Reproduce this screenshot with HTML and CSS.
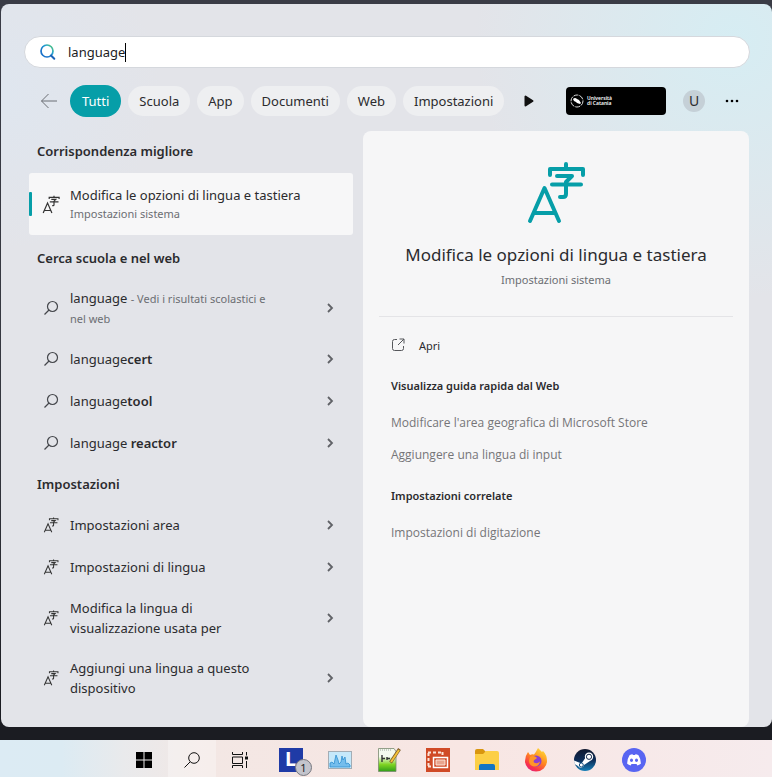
FILE: index.html
```html
<!DOCTYPE html>
<html lang="it">
<head>
    <meta charset="UTF-8">
    <meta name="viewport" content="width=device-width, initial-scale=1.0">
    <title>Cerca</title>
    <link rel="stylesheet" href="styles.css">
</head>
<body>

<!-- Icone condivise -->
<svg class="sprite" aria-hidden="true">
    <symbol id="icon-lang" viewBox="0 0 60 62">
        <path d="M4 59 18.500 26 33 59M9 51h19M40 2v5M24 13V7h33v6M31 14h15l-6 6v12q0 3-3 3h-3M26 22.500h29"/>
    </symbol>
    <symbol id="icon-search" viewBox="0 0 16 16">
        <circle cx="9.500" cy="6.500" r="5"/>
        <path d="M6 10 1.500 14.500"/>
    </symbol>
    <symbol id="icon-chevron" viewBox="0 0 10 12">
        <path d="M3 2 7 6 3 10"/>
    </symbol>
</svg>

<!-- Pannello di ricerca -->
<main class="panel">
    <form class="search-box" onsubmit="return false">
        <svg class="search-logo" viewBox="0 0 18 18" aria-hidden="true">
            <defs>
                <linearGradient id="searchGrad" x1="0" y1="1" x2="1" y2="0">
                    <stop offset="0.3" stop-color="#1a72c9"/>
                    <stop offset="0.65" stop-color="#22a0d0"/>
                    <stop offset="1" stop-color="#5fd068"/>
                </linearGradient>
            </defs>
            <circle cx="8" cy="8" r="6" fill="none" stroke="url(#searchGrad)" stroke-width="1.700"/>
            <path d="M12 12.500 15.300 15.800" stroke="#1a62b8" stroke-width="2" stroke-linecap="round"/>
        </svg>
        <input class="search-input" type="text" value="language" aria-label="Cerca">
        <span class="caret"></span>
    </form>

    <div class="toolbar">
        <button class="back-btn" aria-label="Indietro">
            <svg viewBox="0 0 18 16"><path d="M17 8H1.500M8.500 1 1.500 8l7 7"/></svg>
        </button>
        <nav class="tabs">
            <button class="tab active">Tutti</button>
            <button class="tab">Scuola</button>
            <button class="tab">App</button>
            <button class="tab">Documenti</button>
            <button class="tab">Web</button>
            <button class="tab">Impostazioni</button>
        </nav>
        <button class="next-btn" aria-label="Altre categorie">
            <svg viewBox="0 0 10 12"><path d="M1.500 1.500v9L8.500 6z"/></svg>
        </button>
        <div class="org">
            <svg viewBox="0 0 14 14" aria-hidden="true">
                <circle cx="7" cy="7" r="6" fill="none" stroke="#ddd" stroke-dasharray="5 1"/>
                <path d="M3 5q2-2 4 0l2 1 2 3-1 1-3-1-1-1-2-1z" fill="#fff"/>
            </svg>
            <span>Università<br>di Catania</span>
        </div>
        <button class="avatar">U</button>
        <button class="more-btn" aria-label="Altre opzioni">
            <svg viewBox="0 0 14 4"><circle cx="2" cy="2" r="1.300"/><circle cx="7" cy="2" r="1.300"/><circle cx="12" cy="2" r="1.300"/></svg>
        </button>
    </div>

    <div class="content">
        <section class="results">
            <h2 class="group-title">Corrispondenza migliore</h2>
            <button class="best-match">
                <svg class="icon icon-lang"><use href="#icon-lang"/></svg>
                <span class="row-text">Modifica le opzioni di lingua e tastiera<small>Impostazioni sistema</small></span>
            </button>

            <h2 class="group-title">Cerca scuola e nel web</h2>
            <button class="row tall">
                <svg class="icon"><use href="#icon-search"/></svg>
                <span class="row-text">language <small>- Vedi i risultati scolastici e nel web</small></span>
                <svg class="chevron"><use href="#icon-chevron"/></svg>
            </button>
            <button class="row">
                <svg class="icon"><use href="#icon-search"/></svg>
                <span class="row-text">language<b>cert</b></span>
                <svg class="chevron"><use href="#icon-chevron"/></svg>
            </button>
            <button class="row">
                <svg class="icon"><use href="#icon-search"/></svg>
                <span class="row-text">language<b>tool</b></span>
                <svg class="chevron"><use href="#icon-chevron"/></svg>
            </button>
            <button class="row">
                <svg class="icon"><use href="#icon-search"/></svg>
                <span class="row-text">language <b>reactor</b></span>
                <svg class="chevron"><use href="#icon-chevron"/></svg>
            </button>

            <h2 class="group-title">Impostazioni</h2>
            <button class="row">
                <svg class="icon icon-lang"><use href="#icon-lang"/></svg>
                <span class="row-text">Impostazioni area</span>
                <svg class="chevron"><use href="#icon-chevron"/></svg>
            </button>
            <button class="row">
                <svg class="icon icon-lang"><use href="#icon-lang"/></svg>
                <span class="row-text">Impostazioni di lingua</span>
                <svg class="chevron"><use href="#icon-chevron"/></svg>
            </button>
            <button class="row tall">
                <svg class="icon icon-lang"><use href="#icon-lang"/></svg>
                <span class="row-text">Modifica la lingua di visualizzazione usata per</span>
                <svg class="chevron"><use href="#icon-chevron"/></svg>
            </button>
            <button class="row tall">
                <svg class="icon icon-lang"><use href="#icon-lang"/></svg>
                <span class="row-text">Aggiungi una lingua a questo dispositivo</span>
                <svg class="chevron"><use href="#icon-chevron"/></svg>
            </button>
        </section>

        <!-- Dettaglio del risultato -->
        <section class="preview">
            <svg class="preview-icon"><use href="#icon-lang"/></svg>
            <h1 class="preview-title">Modifica le opzioni di lingua e tastiera</h1>
            <p class="preview-sub">Impostazioni sistema</p>
            <hr>
            <button class="open-btn">
                <svg viewBox="0 0 14 14"><path d="M6 1.500H3.500a2 2 0 0 0-2 2v7a2 2 0 0 0 2 2h7a2 2 0 0 0 2-2V8M8.500 1h4.500v4.500M13 1 7 7"/></svg>
                Apri
            </button>
            <h3>Visualizza guida rapida dal Web</h3>
            <a href="#">Modificare l'area geografica di Microsoft Store</a>
            <a href="#">Aggiungere una lingua di input</a>
            <h3>Impostazioni correlate</h3>
            <a href="#">Impostazioni di digitazione</a>
        </section>
    </div>
</main>

<!-- Barra delle applicazioni -->
<footer class="taskbar">
    <div class="system">
        <button class="task" aria-label="Start">
            <svg class="small" viewBox="0 0 16 16"><path d="M0 0h7.500v7.500H0zM8.500 0H16v7.500H8.500zM0 8.500h7.500V16H0zM8.500 8.500H16V16H8.500z"/></svg>
        </button>
        <button class="task selected" aria-label="Cerca">
            <svg class="small line" viewBox="0 0 16 16"><circle cx="10" cy="6" r="5.300"/><path d="M6.200 9.800.5 15.500"/></svg>
        </button>
        <button class="task" aria-label="Visualizzazione attività">
            <svg class="small line" viewBox="0 0 16 16"><path d="M.5 0v2.500h10V0M.5 5h10v6.500H.5zM.5 16v-2.500h10V16M14.500 0v3.500M14.500 9v7"/><path d="M13 4.500h3v3h-3z" fill="#111" stroke="none"/></svg>
        </button>
    </div>
    <div class="apps">
        <button class="task" aria-label="L, 1 notifica">
            <span class="app-l">L</span>
            <span class="badge">1</span>
        </button>
        <button class="task" aria-label="Monitor">
            <svg viewBox="0 0 24 24">
                <rect x=".5" y="3.500" width="23" height="17" fill="#c5e8fa" stroke="#a3adb5"/>
                <path d="M2 19v-4l2-1 2 2 2-9 2 5 1 4 2-2 1-6 1 4 2-3 1 7 2-1 2 2v2z" fill="#74bdec" stroke="#2f8fd0" stroke-width=".8"/>
            </svg>
        </button>
        <button class="task" aria-label="Editor">
            <svg viewBox="0 0 24 24">
                <defs>
                    <linearGradient id="greenGrad" x1="0" y1="0" x2="0" y2="1">
                        <stop offset="0.35" stop-color="#f4faee"/>
                        <stop offset="0.7" stop-color="#7ed321"/>
                        <stop offset="1" stop-color="#2f9e1a"/>
                    </linearGradient>
                </defs>
                <path d="M1.500.500H17l2 3v20H1.500z" fill="url(#greenGrad)" stroke="#7a8a70" stroke-width=".8"/>
                <path d="M3 2h12" stroke="#9aa59a" stroke-dasharray="1 1"/>
                <path d="M5 7v7M5 10.500h3M10 9v3M13 10.500h-3" stroke="#333" stroke-width="1.400"/>
                <path d="M22.500 1 13.500 14.500" stroke="#7a5a28" stroke-width="3.200"/>
                <path d="M22 2 14 14" stroke="#f3c238" stroke-width="2"/>
            </svg>
        </button>
        <button class="task" aria-label="Cattura">
            <svg viewBox="0 0 24 24">
                <path d="M0 0h24v24H0z" fill="#d04a26"/>
                <path d="M2 4.500h15M2.500 5v13M2 18.500h5M16.500 4v4" stroke="#fbe3d8" stroke-width="2" stroke-dasharray="3 2" fill="none"/>
                <path d="M7.500 9.500h14v10h-14z" fill="#d04a26" stroke="#fff" stroke-width="1.500"/>
                <path d="M10 12h9v5h-9z" fill="#e8a58f" stroke="#fbe3d8"/>
            </svg>
        </button>
        <button class="task" aria-label="Esplora file">
            <svg viewBox="0 0 24 24">
                <path d="M0 3a2 2 0 0 1 2-2h6l3 3v4H0z" fill="#d9960f"/>
                <path d="M0 6h8l3-3h11a2 2 0 0 1 2 2v17H0z" fill="#fccf45"/>
                <path d="M4 22v-4a2 2 0 0 1 2-2h12a2 2 0 0 1 2 2v4z" fill="#1475c4"/>
            </svg>
        </button>
        <button class="task" aria-label="Firefox">
            <svg viewBox="0 0 24 24">
                <defs>
                    <linearGradient id="foxGrad" x1="0.8" y1="0" x2="0.2" y2="1">
                        <stop offset="0" stop-color="#ffe03a"/>
                        <stop offset="0.45" stop-color="#ff8a20"/>
                        <stop offset="0.8" stop-color="#f8334a"/>
                        <stop offset="1" stop-color="#e0208a"/>
                    </linearGradient>
                </defs>
                <path d="M4 4l2 3q2-1 4-.5Q12 4 14 0q2 2 4 4l1-1q4 4 4 10a11 10.500 0 0 1-22 0Q1 8 4 4z" fill="url(#foxGrad)"/>
                <circle cx="12" cy="13" r="5.500" fill="#8c3fd0"/>
                <path d="M6 9q3-2 6 0 2 1-1 2.500-2 1-1 3 3 2 6-1-1 5-6 5-5-1-5-6z" fill="#ff9528"/>
            </svg>
        </button>
        <button class="task" aria-label="Steam">
            <svg viewBox="0 0 24 24">
                <defs>
                    <linearGradient id="steamGrad" x1="0" y1="0" x2="0" y2="1">
                        <stop offset="0" stop-color="#10182e"/>
                        <stop offset="0.5" stop-color="#0d2c57"/>
                        <stop offset="1" stop-color="#1780b8"/>
                    </linearGradient>
                </defs>
                <circle cx="12" cy="12" r="11" fill="url(#steamGrad)"/>
                <path d="M1 12.500 8.500 15.500 13 9l4 4-6 4a3.200 3.200 0 0 1-6 1L1.500 16z" fill="#fff"/>
                <circle cx="16" cy="8.800" r="4.200" fill="#fff"/>
                <circle cx="16" cy="8.800" r="2.600" fill="#fff" stroke="#10254a"/>
                <circle cx="8.300" cy="17" r="2" fill="#fff" stroke="#124a7c"/>
            </svg>
        </button>
        <button class="task" aria-label="Discord">
            <svg viewBox="0 0 24 24">
                <circle cx="12" cy="12" r="12" fill="#5865f2"/>
                <path d="M7.500 7.200q1.500-.9 3-1l.5.900h2l.5-.9q1.500.1 3 1 2.500 4 2.300 8.600-1.500 1.200-3.400 1.700l-.9-1.500h-5l-.9 1.500q-1.900-.5-3.400-1.700Q5 11.200 7.500 7.200z" fill="#fff"/>
                <ellipse cx="9.500" cy="12.300" rx="1.500" ry="1.700" fill="#5865f2"/>
                <ellipse cx="14.500" cy="12.300" rx="1.500" ry="1.700" fill="#5865f2"/>
            </svg>
        </button>
    </div>
</footer>

</body>
</html>
```
FILE: styles.css
```css
* {
    box-sizing: border-box;
}
body {
    margin: 0;
    min-height: 100vh;
    padding-top: 4px;
    display: flex;
    flex-direction: column;
    gap: 13px;
    font-family: "Noto Sans", "Open Sans", sans-serif;
    font-size: 13px;
    color: #2b2b2e;
    background: linear-gradient(#3a3c46, #33353d 60%, #1b1c22 90%);
}
button {
    font: inherit;
    color: inherit;
    border: none;
    background: none;
    padding: 0;
    cursor: pointer;
}
svg {
    display: block;
    flex: none;
}
.sprite {
    position: absolute;
    width: 0;
    height: 0;
}

/* Pannello */
.panel {
    flex: 1;
    display: flex;
    flex-direction: column;
    margin-left: 1px;
    padding: 32px 22px 0 23px;
    border-radius: 8px;
    background:
        radial-gradient(circle at 95% 5%, #d6edf3, rgba(214, 237, 243, 0) 260px),
        radial-gradient(circle at 0 12%, #dfe6ef, rgba(223, 230, 239, 0) 160px),
        #e3e4e9;
}
.search-box {
    display: flex;
    align-items: center;
    height: 32px;
    padding: 0 14px;
    border: 1px solid #d5d8dd;
    border-radius: 16px;
    background: #fff;
}
.search-logo {
    width: 18px;
    height: 18px;
    margin-right: 11px;
}
.search-input {
    field-sizing: content;
    padding: 0;
    border: none;
    outline: none;
    background: none;
    font: inherit;
    color: #1c1c1e;
}
.caret {
    width: 1px;
    height: 19px;
    background: #000;
}

/* Categorie */
.toolbar {
    display: flex;
    align-items: center;
    height: 32px;
    margin-top: 17px;
    padding: 0 11px 0 16px;
}
.back-btn svg {
    width: 18px;
    height: 16px;
    fill: none;
    stroke: #6b6e74;
}
.tabs {
    display: flex;
    align-items: center;
    gap: 7px;
    margin-left: 12px;
}
.tab {
    height: 30px;
    padding: 0 11px;
    border-radius: 15px;
    background: #eeeff1;
}
.tab.active {
    height: 32px;
    padding: 0 12px;
    border-radius: 16px;
    background: #069ea8;
    color: #fff;
}
.next-btn {
    margin-left: 20px;
}
.next-btn svg {
    width: 10px;
    height: 12px;
    fill: #111;
    stroke: #111;
    stroke-width: 2;
    stroke-linejoin: round;
}
.org {
    display: flex;
    align-items: center;
    gap: 3px;
    width: 100px;
    height: 28px;
    margin-left: auto;
    padding-left: 4px;
    border-radius: 4px;
    background: #000;
    color: #fff;
    font-size: 5px;
    font-weight: 600;
    line-height: 5px;
}
.org svg {
    width: 14px;
    height: 14px;
}
.avatar {
    width: 22px;
    height: 22px;
    margin-left: 17px;
    border-radius: 50%;
    background: #c5d0d7;
    font-size: 14px;
    line-height: 22px;
}
.more-btn {
    margin-left: 20px;
}
.more-btn svg {
    width: 14px;
    height: 4px;
}

/* Risultati */
.content {
    flex: 1;
    display: grid;
    grid-template-columns: 324fr 386fr;
    gap: 10px;
    margin-top: 14px;
    padding: 0 1px 0 5px;
}
.group-title {
    margin: 0;
    padding-left: 8px;
    font-size: 13px;
    font-weight: 600;
    line-height: 40px;
}
.best-match, .row {
    display: flex;
    align-items: center;
    width: 100%;
    padding-left: 14px;
    text-align: left;
    line-height: 20px;
}
.best-match {
    position: relative;
    height: 62px;
    margin: 2px 0 3px;
    border-radius: 3px;
    background: #f7f7f8;
}
.best-match::before {
    content: "";
    position: absolute;
    left: 0;
    top: 19px;
    width: 3px;
    height: 24px;
    border-radius: 1px;
    background: #069ea8;
}
.row {
    height: 42px;
}
.row.tall {
    height: 60px;
}
.icon {
    width: 16px;
    height: 16px;
    margin-right: 11px;
    fill: none;
    stroke: #45474c;
    stroke-width: 1.2;
}
.icon-lang {
    stroke-width: 4;
    stroke: #333;
}
.best-match .icon {
    width: 18px;
    height: 19px;
    margin: 0 10px 0 -1px;
}
.row-text {
    flex: 1;
}
.row .row-text {
    padding-right: 36px;
}
small {
    font-size: 11px;
    line-height: 18px;
    color: #6c6e73;
}
.best-match small {
    display: block;
}
b {
    font-weight: 600;
}
.chevron {
    width: 10px;
    height: 12px;
    margin: 0 18px 0 12px;
    fill: none;
    stroke: #606267;
    stroke-width: 1.8;
}

/* Dettaglio */
.preview {
    display: flex;
    flex-direction: column;
    padding: 31px 16px 0;
    border-radius: 8px;
    background: #f6f6f7;
    font-size: 11px;
}
.preview-icon {
    align-self: center;
    width: 60px;
    height: 62px;
    fill: none;
    stroke: #069ea8;
    stroke-width: 4;
    stroke-linecap: round;
    stroke-linejoin: round;
}
.preview-title {
    margin: 19px 0 0;
    font-size: 17px;
    font-weight: 400;
    line-height: 24px;
    text-align: center;
}
.preview-sub {
    margin: 3px 0 0;
    line-height: 20px;
    text-align: center;
    color: #6c6e73;
}
.preview hr {
    width: 100%;
    margin: 26px 0 14px;
    border: none;
    border-top: 1px solid #e4e4e7;
}
.open-btn {
    display: flex;
    align-items: center;
    gap: 14px;
    height: 28px;
    margin-bottom: 2px;
    padding-left: 12px;
}
.open-btn svg {
    width: 14px;
    height: 14px;
    fill: none;
    stroke: #55575b;
}
.preview h3 {
    margin: 9px 0 5px;
    padding-left: 12px;
    font-size: 11px;
    font-weight: 600;
    line-height: 32px;
}
.preview a {
    padding-left: 12px;
    font-family: "Open Sans", sans-serif;
    font-size: 12px;
    line-height: 32px;
    color: #757578;
    text-decoration: none;
}

/* Barra delle applicazioni */
.taskbar {
    display: flex;
    justify-content: center;
    gap: 2px;
    height: 37px;
    padding-left: 6px;
    background: linear-gradient(90deg, #dcebf4, #dcebf3 8%, #e9eaec 16%, #f3e7e4 27%, #f8e6e3 60%, #f6ebed);
}
.system, .apps {
    display: flex;
}
.task {
    position: relative;
    display: flex;
    align-items: center;
    justify-content: center;
    width: 49px;
    padding-top: 3px;
}
.system .task {
    width: 48px;
}
.task.selected {
    background: rgba(255, 255, 255, 0.3);
}
.task svg {
    width: 24px;
    height: 24px;
}
.task .small {
    width: 16px;
    height: 16px;
}
.task .line {
    fill: none;
    stroke: #111;
}
.app-l {
    width: 24px;
    height: 24px;
    background: #1f3ba6;
    color: #fff;
    font-size: 20px;
    font-weight: 700;
    line-height: 22px;
}
.badge {
    position: absolute;
    left: 29px;
    top: 19px;
    width: 17px;
    height: 17px;
    border: 1px solid #77787f;
    border-radius: 50%;
    background: #c3c4cc;
    color: #222;
    font-size: 11px;
    line-height: 15px;
}
```
